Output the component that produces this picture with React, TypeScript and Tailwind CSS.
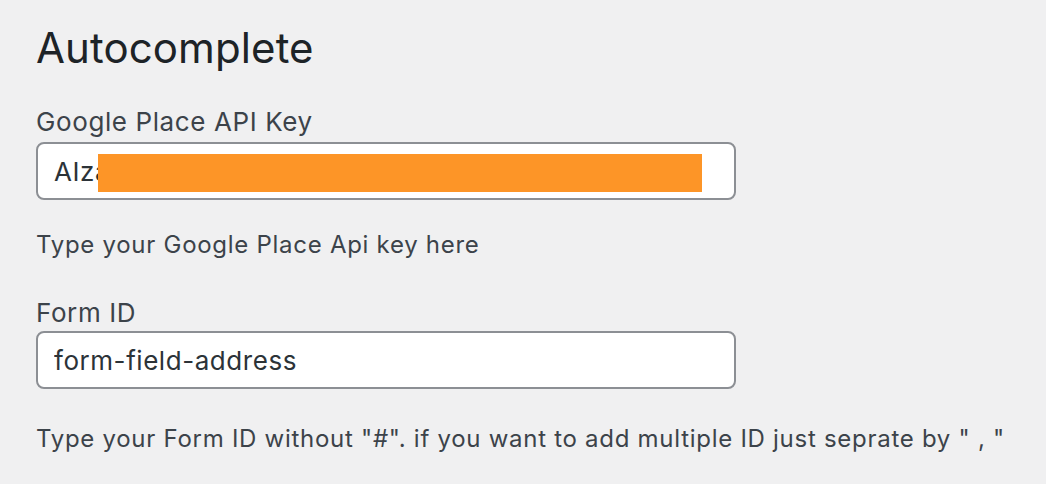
import React from "react";

export default function App() {
  return (
    <div
      className="w-[1046px] h-[484px] bg-[#f0f0f1] pl-[36px] pt-[22px] overflow-hidden"
      style={{ fontFamily: "Inter, 'Noto Sans', sans-serif" }}
    >
      <h2 className="text-[42px] leading-[52px] tracking-[0.1px] text-[#1d2327] font-normal">Autocomplete</h2>

      <label className="block mt-[33px] text-[26px] leading-[30px] tracking-[0.6px] text-[#3c434a]">Google Place API Key</label>
      <div className="relative mt-[5px] w-[700px] h-[58px]">
        <input
          readOnly
          value="AIza"
          className="w-full h-full border-2 border-[#8c8f94] rounded-[8px] bg-white pl-[16px] text-[26px] tracking-[0.55px] text-[#2c3338] outline-none"
        />
        <div className="absolute left-[62px] top-[12px] w-[604px] h-[38px] bg-[#fd9527]" />
      </div>
      <p className="mt-[30px] text-[24px] leading-[29px] tracking-[0.72px] text-[#3c434a]">Type your Google Place Api key here</p>

      <label className="block mt-[39px] text-[26px] leading-[30px] tracking-[0.6px] text-[#3c434a]">Form ID</label>
      <div className="mt-[3px] w-[700px] h-[58px]">
        <input
          readOnly
          value="form-field-address"
          className="w-full h-full border-2 border-[#8c8f94] rounded-[8px] bg-white pl-[16px] text-[26px] tracking-[0.55px] text-[#2c3338] outline-none"
        />
      </div>
      <p className="mt-[35px] text-[24px] leading-[29px] tracking-[0.72px] text-[#3c434a]">
        Type your Form ID without "#". if you want to add multiple ID just seprate by " , "
      </p>
    </div>
  );
}
